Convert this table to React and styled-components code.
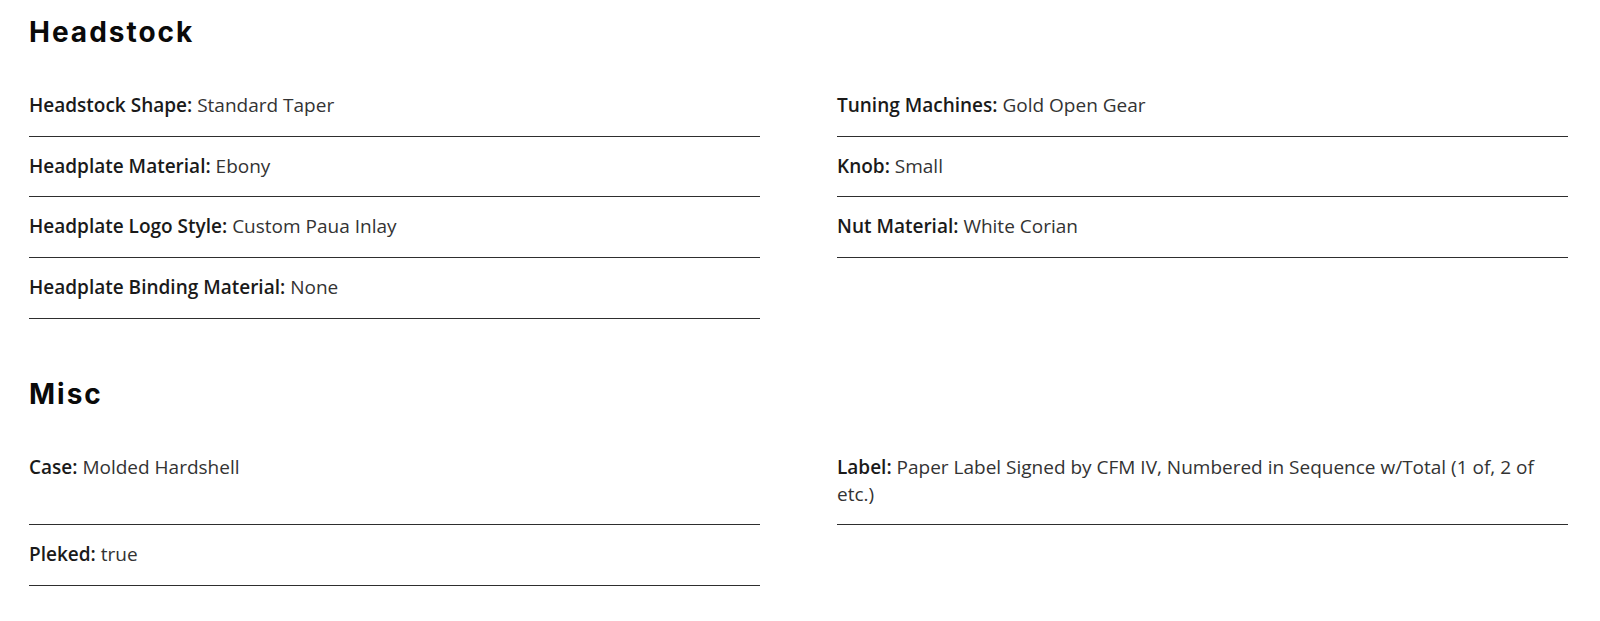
import React from "react";
import styled, { createGlobalStyle } from "styled-components";

const GlobalStyle = createGlobalStyle`
	body {
		margin: 0;
		background: #fff;
		font-family: "Open Sans", "Liberation Sans", sans-serif;
		color: #333;
	}
`;

const specs = [
	{
		title: "Headstock",
		items: [
			["Headstock Shape", "Standard Taper"],
			["Tuning Machines", "Gold Open Gear"],
			["Headplate Material", "Ebony"],
			["Knob", "Small"],
			["Headplate Logo Style", "Custom Paua Inlay"],
			["Nut Material", "White Corian"],
			["Headplate Binding Material", "None"],
		],
	},
	{
		title: "Misc",
		items: [
			["Case", "Molded Hardshell"],
			[
				"Label",
				"Paper Label Signed by CFM IV, Numbered in Sequence w/Total (1 of, 2 of etc.)",
			],
			["Pleked", "true"],
		],
	},
];

const App = () => {
	return (
		<Page>
			<GlobalStyle />
			{specs.map((section) => (
				<Section key={section.title}>
					<SectionTitle>{section.title}</SectionTitle>
					<SpecGrid>
						{section.items.map(([label, value]) => (
							<SpecRow key={label}>
								<SpecLabel>{label}:</SpecLabel> {value}
							</SpecRow>
						))}
					</SpecGrid>
				</Section>
			))}
		</Page>
	);
};

const Page = styled.div`
	padding: 15px 32px 20px 29px;
`;

const Section = styled.section`
	& + & {
		margin-top: 58px;
	}
`;

const SectionTitle = styled.h2`
	margin: 0 0 27px;
	font-family: "Inter", "Liberation Sans", sans-serif;
	font-weight: 700;
	font-size: 28px;
	line-height: 34px;
	letter-spacing: 2px;
	color: #0a0a0a;
`;

const SpecGrid = styled.div`
	display: grid;
	grid-template-columns: 1fr 1fr;
	column-gap: 77px;
`;

const SpecRow = styled.div`
	padding: 16px 0 16.7px;
	border-bottom: 1px solid #2e2e2e;
	font-size: 19px;
	line-height: 27px;
	color: #333;
`;

const SpecLabel = styled.strong`
	font-weight: 600;
	color: #1a1a1a;
`;

export default App;
